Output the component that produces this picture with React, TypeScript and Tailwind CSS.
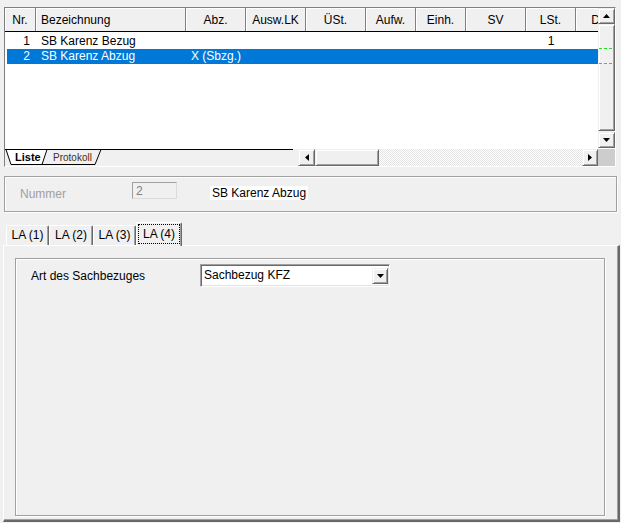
import React from "react";

const headerCols: { t: string; c: string }[] = [
  { t: "Nr.", c: "w-[31px] justify-center" },
  { t: "Bezeichnung", c: "w-[150px] pl-[5px]" },
  { t: "Abz.", c: "w-[60px] justify-center" },
  { t: "Ausw.LK", c: "w-[60px] justify-center" },
  { t: "ÜSt.", c: "w-[60px] justify-center" },
  { t: "Aufw.", c: "w-[50px] justify-center" },
  { t: "Einh.", c: "w-[50px] justify-center" },
  { t: "SV", c: "w-[60px] justify-center" },
  { t: "LSt.", c: "w-[50px] justify-center" },
  { t: "D", c: "w-[40px] justify-center" },
];

const rowCols = [
  "w-[29px] text-right pr-[6px]",
  "w-[150px] pl-[5px]",
  "w-[60px] text-center",
  "w-[60px] text-center",
  "w-[60px] text-center",
  "w-[50px] text-center",
  "w-[50px] text-center",
  "w-[60px] text-center",
  "w-[50px] text-center",
  "w-[40px] text-center",
];

const rows: { sel: boolean; v: string[] }[] = [
  { sel: false, v: ["1", "SB Karenz Bezug", "", "", "", "", "", "", "1", ""] },
  { sel: true, v: ["2", "SB Karenz Abzug", "X (Sbzg.)", "", "", "", "", "", "", ""] },
];

const btn3d =
  "flex items-center justify-center bg-[#f0f0f0] border border-t-[#f0f0f0] border-l-[#f0f0f0] border-r-[#696969] border-b-[#696969] shadow-[inset_1px_1px_0_#ffffff,inset_-1px_-1px_0_#a0a0a0] shrink-0";

function Up() {
  return (
    <svg width="7" height="4" className="block">
      <path d="M3.5 0 L7 4 L0 4 Z" fill="#000" />
    </svg>
  );
}
function Down() {
  return (
    <svg width="7" height="4" className="block">
      <path d="M0 0 L7 0 L3.5 4 Z" fill="#000" />
    </svg>
  );
}
function Left() {
  return (
    <svg width="4" height="7" className="block">
      <path d="M4 0 L4 7 L0 3.5 Z" fill="#000" />
    </svg>
  );
}
function Right() {
  return (
    <svg width="4" height="7" className="block">
      <path d="M0 0 L4 3.5 L0 7 Z" fill="#000" />
    </svg>
  );
}

export default function App() {
  return (
    <div className="w-[621px] h-[523px] overflow-hidden bg-[#f0f0f0] text-[12px] leading-[15px] text-black font-['Liberation_Sans',Arial,sans-serif] flex flex-col pt-[7px]">
      {/* Grid control */}
      <div className="ml-[4px] w-[612px] h-[160px] shrink-0 flex flex-col border border-t-[#808080] border-l-[#808080] border-r-white border-b-white">
        <div className="flex h-[140px] shrink-0">
          <div className="w-[593px] h-full bg-white overflow-hidden flex flex-col shrink-0">
            <div className="flex h-[24px] shrink-0 bg-[#f0f0f0] border-b border-black">
              {headerCols.map((c, i) => (
                <div
                  key={i}
                  className={
                    "h-full flex items-center pt-[2px] shrink-0 border-r border-[#808080] shadow-[inset_1px_1px_0_#ffffff] whitespace-nowrap " +
                    c.c
                  }
                >
                  {c.t}
                </div>
              ))}
            </div>
            <div className="pt-[2px] flex flex-col">
              {rows.map((r, ri) => (
                <div
                  key={ri}
                  className={
                    r.sel
                      ? "ml-[2px] flex h-[15px] items-center bg-[#0078d7] text-white"
                      : "ml-[2px] flex h-[15px] items-center"
                  }
                >
                  {r.v.map((v, ci) => (
                    <div key={ci} className={"shrink-0 whitespace-nowrap " + rowCols[ci]}>
                      {v}
                    </div>
                  ))}
                </div>
              ))}
            </div>
          </div>
          {/* vertical scrollbar */}
          <div className="relative w-[17px] h-full flex flex-col bg-[#f0f0f0]">
            <div className={btn3d + " h-[16px]"}>
              <Up />
            </div>
            <div className={btn3d + " flex-1 mb-[1px]"} />
            <div className={btn3d + " h-[16px]"}>
              <Down />
            </div>
            <svg width="17" height="1" className="absolute left-0 top-[40px]">
              <line x1="1" y1="0.5" x2="15" y2="0.5" stroke="#22e022" strokeDasharray="3 2" />
            </svg>
            <svg width="17" height="1" className="absolute left-0 top-[55px]">
              <line x1="1" y1="0.5" x2="15" y2="0.5" stroke="#22e022" strokeDasharray="3 2" />
            </svg>
          </div>
        </div>
        <div className="flex h-[18px] shrink-0 bg-white">
          <svg width="293" height="18" className="block shrink-0">
            <rect x="0" y="1" width="293" height="17" fill="#f0f0f0" />
            <polygon points="32,1.5 37,16.5 90,16.5 96,1.5" fill="#f0f0f0" stroke="#000" strokeWidth="1" />
            <polygon points="1,1.5 6,16.5 37,16.5 42,1.5" fill="#ffffff" stroke="#000" strokeWidth="1" />
            <line x1="0" y1="1.5" x2="288" y2="1.5" stroke="#000" strokeWidth="1" />
            <text x="10" y="13" fontSize="11" fontWeight="bold" fontFamily="Liberation Sans, Arial, sans-serif" fill="#000">
              Liste
            </text>
            <text x="48" y="12.5" fontSize="10" fontFamily="Liberation Sans, Arial, sans-serif" fill="#4a2e10">
              Protokoll
            </text>
          </svg>
          <div className="flex w-[300px] h-[17px] mt-[1px] shrink-0">
            <div className={btn3d + " w-[17px] h-full"}>
              <Left />
            </div>
            <div className={btn3d + " w-[64px] h-full"} />
            <div className="flex-1 h-full bg-[image:repeating-conic-gradient(#ffffff_0%_25%,#e4e4e4_0%_50%)] bg-[length:2px_2px]" />
            <div className={btn3d + " w-[16px] h-full"}>
              <Right />
            </div>
          </div>
          <div className="w-[17px] h-[17px] mt-[1px] bg-[#cdcdcd] shrink-0" />
        </div>
      </div>

      {/* Nummer group */}
      <div className="mt-[9px] ml-[4px] w-[613px] h-[36px] shrink-0 border border-[#a0a0a0] shadow-[inset_1px_1px_0_#ffffff,1px_1px_0_#ffffff] flex items-start pt-[5px]">
        <span className="w-[127px] pl-[15px] mt-[6px] leading-[13px] text-[#a0a0a0] shrink-0">Nummer</span>
        <div className="w-[45px] h-[17px] shrink-0 flex items-center pl-[3px] pt-[2px] bg-[#f0f0f0] border border-t-[#a0a0a0] border-l-[#a0a0a0] border-r-[#dcdcdc] border-b-[#dcdcdc] text-[#808080] leading-[13px]">
          2
        </div>
        <span className="ml-[33px] mt-[4px] h-[14px] pt-[1px] leading-[13px] bg-white px-[2px] shrink-0">SB Karenz Abzug</span>
      </div>

      {/* Tabs */}
      <div className="mt-[10px] h-[23px] shrink-0 flex items-end pl-[6px]">
        <div className="w-[43px] h-[20px] shrink-0 flex items-center justify-center border-l border-t border-r border-l-white border-t-white border-r-[#696969] shadow-[inset_-1px_0_0_#a0a0a0] rounded-tl-[2px] rounded-tr-[2px]">
          LA (1)
        </div>
        <div className="w-[44px] h-[20px] shrink-0 flex items-center justify-center border-l border-t border-r border-l-white border-t-white border-r-[#696969] shadow-[inset_-1px_0_0_#a0a0a0] rounded-tl-[2px] rounded-tr-[2px]">
          LA (2)
        </div>
        <div className="w-[43px] h-[20px] shrink-0 flex items-center justify-center border-l border-t border-r border-l-white border-t-white border-r-[#696969] shadow-[inset_-1px_0_0_#a0a0a0] rounded-tl-[2px] rounded-tr-[2px]">
          LA (3)
        </div>
        <div className="relative z-10 w-[46px] h-[24px] mb-[-1px] shrink-0 flex px-[1px] pt-[1px] pb-[2px] bg-[#f0f0f0] border-l border-t border-r border-l-white border-t-white border-r-[#696969] shadow-[inset_-1px_0_0_#a0a0a0] rounded-tl-[2px] rounded-tr-[2px]">
          <div className="flex-1 flex items-center justify-center border border-dotted border-black">LA (4)</div>
        </div>
      </div>

      {/* Tab page */}
      <div className="ml-[3px] w-[617px] h-[277px] shrink-0 border-t border-l border-r-2 border-b-2 border-t-white border-l-white border-r-[#696969] border-b-[#696969] shadow-[inset_-1px_-1px_0_#a0a0a0] pl-[11px] pt-[12px]">
        <div className="w-[590px] h-[258px] border border-[#a0a0a0] shadow-[inset_1px_1px_0_#ffffff,1px_1px_0_#ffffff]">
          <div className="flex items-center h-[23px] mt-[5px] pl-[15px]">
            <span className="w-[169px] shrink-0 pt-[2px]">Art des Sachbezuges</span>
            <div className="w-[190px] h-[23px] shrink-0 flex items-center justify-between bg-white border border-t-[#a0a0a0] border-l-[#a0a0a0] border-r-white border-b-white shadow-[inset_1px_1px_0_#696969,inset_-1px_-1px_0_#e3e3e3]">
              <span className="pl-[3px]">Sachbezug KFZ</span>
              <div className={btn3d + " w-[16px] h-[16px] mr-[1px]"}>
                <Down />
              </div>
            </div>
          </div>
        </div>
      </div>
    </div>
  );
}
